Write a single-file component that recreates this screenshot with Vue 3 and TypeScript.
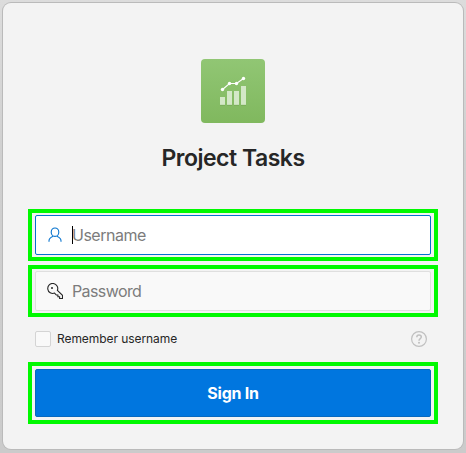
<script setup lang="ts">
import { ref } from 'vue'

const username = ref<string>('')
const password = ref<string>('')
const remember = ref<boolean>(false)
</script>

<template>
  <main class="page">
    <form class="card" @submit.prevent>
      <svg class="logo" viewBox="0 0 64 64" aria-hidden="true">
        <defs>
          <linearGradient id="tile" x1="0" y1="0" x2="0" y2="1">
            <stop offset="0" stop-color="#91c674" />
            <stop offset="1" stop-color="#80b85e" />
          </linearGradient>
        </defs>
        <rect width="64" height="64" rx="4" fill="url(#tile)" />
        <path d="M19 38h5v8h-5zM26 32h5v14h-5zM33 32h5v14h-5zM40 27h5v19h-5z" fill="#d3e8c7" />
        <path d="M19 46.3h5M26 46.3h5M33 46.3h5M40 46.3h5" stroke="#72a654" stroke-width=".7" />
        <path d="M21.5 30.5 28.5 24.5H35.5L42.5 19.5" fill="none" stroke="#fff" stroke-width="1.1" />
        <g fill="#fff">
          <circle cx="21.5" cy="30.5" r="1.7" />
          <circle cx="28.5" cy="24.5" r="1.7" />
          <circle cx="35.5" cy="24.5" r="1.7" />
          <circle cx="42.5" cy="19.5" r="1.7" />
        </g>
      </svg>
      <h1 class="title">Project Tasks</h1>

      <div class="frame">
        <label class="field active">
          <svg class="icon" viewBox="0 0 16 16" fill="none" stroke="currentColor" stroke-width="1.1">
            <ellipse cx="8" cy="5.2" rx="3.8" ry="4.2" />
            <path d="M2 14.8V13.7C2 11.7 3.6 10.3 6.3 9.2M9.7 9.2C12.4 10.3 14 11.7 14 13.7V14.8" />
          </svg>
          <span class="caret"></span>
          <input v-model="username" type="text" placeholder="Username" />
        </label>
      </div>

      <div class="frame">
        <label class="field">
          <svg class="icon" viewBox="0 0 16 16" fill="none" stroke="currentColor" stroke-width="1.1">
            <path d="M7.6 10.1A5 5 0 1 1 10.4 7.3L15.5 12.4V15.5H12.6V13.7H10.9V12H9.3L7.6 10.1Z" />
            <circle cx="5" cy="5" r="1" fill="currentColor" stroke="none" />
          </svg>
          <input v-model="password" class="secret" type="password" placeholder="Password" />
        </label>
      </div>

      <div class="options">
        <label class="remember">
          <input v-model="remember" class="check" type="checkbox" />
          <span>Remember username</span>
        </label>
        <svg class="help" viewBox="0 0 16 16" fill="none" stroke="#c0c0c0" stroke-width="1.2">
          <circle cx="8" cy="8" r="7.4" />
          <path d="M5.8 6.3C5.8 4.9 6.7 4.1 8 4.1S10.3 4.9 10.3 6.1C10.3 7.7 8 7.6 8 9.7" stroke-width="1.5" />
          <circle cx="8" cy="11.7" r="1" fill="#c0c0c0" stroke="none" />
        </svg>
      </div>

      <div class="frame action">
        <button class="submit" type="submit">Sign In</button>
      </div>
    </form>
  </main>
</template>

<style>
body {
  background: #d2d2d2;
}
</style>

<style scoped>
.page {
  box-sizing: border-box;
  height: 453px;
  padding: 3px 3px 4px;
  background: linear-gradient(#dcdcdc, #cfcfcf 35%, #cbcbcb);
  font-family: Inter, 'Liberation Sans', sans-serif;
  color: #262626;
}
.card {
  box-sizing: border-box;
  display: flex;
  flex-direction: column;
  height: 446px;
  padding: 56px 25px 25px;
  border-radius: 8px;
  background: #f3f3f3;
  box-shadow: 0 0 0 1px #bababa;
}
.logo {
  flex: none;
  align-self: center;
  width: 64px;
  height: 64px;
}
.title {
  margin: 19px 0 35px;
  font-size: 23px;
  line-height: 32px;
  font-weight: 600;
  letter-spacing: -0.48px;
  text-align: center;
}
.frame {
  box-sizing: border-box;
  height: 52px;
  margin-bottom: 4px;
  padding: 2px 3px;
  border: 4px solid #00f900;
}
.field {
  box-sizing: border-box;
  display: flex;
  align-items: center;
  height: 40px;
  padding: 0 11px;
  border: 1px solid #dfdfdf;
  border-radius: 2px;
  background: #f9f9f9;
  color: #262626;
}
.active {
  border-color: #0572ce;
  background: #fff;
  color: #0572ce;
}
.icon {
  flex: none;
  width: 16px;
  height: 16px;
  margin-right: 9px;
}
.caret {
  width: 1px;
  height: 18px;
  margin-right: -1px;
  background: #000;
}
.field input {
  flex: 1;
  min-width: 0;
  height: 24px;
  padding: 0;
  border: 0;
  outline: 0;
  background: transparent;
  font: 400 16px/24px Inter, 'Liberation Sans', sans-serif;
  letter-spacing: -0.5px;
  color: #262626;
}
.field .secret {
  letter-spacing: -0.6px;
}
.field input::placeholder {
  color: #7c7c7c;
  opacity: 1;
}
.options {
  display: flex;
  align-items: center;
  justify-content: space-between;
  height: 16px;
  margin: 10px 11px 15px 7px;
}
.remember {
  display: flex;
  align-items: center;
  gap: 6px;
  font-size: 12px;
  line-height: 16px;
  letter-spacing: -0.07px;
}
.check {
  appearance: none;
  box-sizing: border-box;
  width: 16px;
  height: 16px;
  margin: 0;
  border: 1px solid #d4d4d4;
  border-radius: 2px;
  background: #f9f9f9;
}
.help {
  width: 16px;
  height: 16px;
}
.action {
  height: 62px;
  margin: 0;
  padding: 3px;
}
.submit {
  display: block;
  width: 100%;
  height: 48px;
  padding: 0;
  border: 1px solid #0869bf;
  border-radius: 2px;
  background: #0076df;
  color: #fff;
  font: 700 16px/24px Inter, 'Liberation Sans', sans-serif;
  letter-spacing: -0.25px;
}
</style>
